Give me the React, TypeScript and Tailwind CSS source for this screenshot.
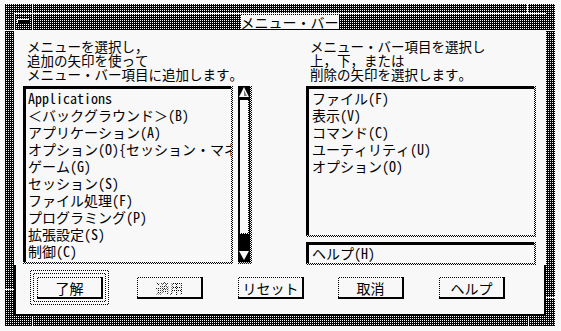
import React from "react";

const D75 = "bg-[conic-gradient(#f8f8f8_0_25%,#000_0)] bg-[length:2px_2px]";
const D50 = "bg-[repeating-conic-gradient(#000_0_25%,#f8f8f8_0_50%)] bg-[length:2px_2px]";
const FONT = "font-['Noto_Sans_Mono_CJK_JP','Noto_Sans_CJK_JP',monospace] font-light";

function Button({ label, disabled }: { label: string; disabled?: boolean }) {
  return (
    <div className="w-[66px] h-[22px] bg-black pr-[2px] pb-[2px]">
      <div className={`w-full h-full ${D50} pt-px pl-px`}>
        <div className="w-full h-full bg-[#f8f8f8] flex items-center justify-center text-[14px] leading-[14px]">
          {disabled ? (
            <span className={`${D50} bg-clip-text text-transparent`}>{label}</span>
          ) : (
            <span>{label}</span>
          )}
        </div>
      </div>
    </div>
  );
}

function Sunken({ className, children }: { className: string; children?: React.ReactNode }) {
  return (
    <div className={`${className} ${D50} pr-[2px] pb-[2px]`}>
      <div className="w-full h-full bg-[#f8f8f8] border-t-[3px] border-l-[3px] border-black overflow-hidden">
        {children}
      </div>
    </div>
  );
}

export default function App() {
  const leftItems = [
    "Applications",
    "＜バックグラウンド＞(B)",
    "アプリケーション(A)",
    "オプション(O){セッション・マネージャ}",
    "ゲーム(G)",
    "セッション(S)",
    "ファイル処理(F)",
    "プログラミング(P)",
    "拡張設定(S)",
    "制御(C)",
  ];
  const rightItems = ["ファイル(F)", "表示(V)", "コマンド(C)", "ユーティリティ(U)", "オプション(O)"];

  return (
    <div className={`w-[561px] h-[331px] bg-[#f8f8f8] pt-[4px] pl-[5px] overflow-hidden text-black ${FONT}`}>
      <div className={`relative w-[550px] h-[322px] ${D75} pt-[9px] px-[9px] pb-[10px] flex flex-col`}>
        {/* resize corner separators */}
        <span className="absolute left-[27px] top-0 w-px h-[9px] bg-[#f8f8f8]" />
        <span className="absolute left-[522px] top-0 w-px h-[9px] bg-[#f8f8f8]" />
        <span className="absolute left-[27px] bottom-0 w-px h-[10px] bg-[#f8f8f8]" />
        <span className="absolute left-[523px] bottom-0 w-px h-[10px] bg-[#f8f8f8]" />
        <span className="absolute left-0 top-[26px] w-[9px] h-px bg-[#f8f8f8]" />
        <span className="absolute right-0 top-[26px] w-[9px] h-px bg-[#f8f8f8]" />
        <span className="absolute left-0 top-[285px] w-[9px] h-px bg-[#f8f8f8]" />
        <span className="absolute right-0 top-[293px] w-[9px] h-px bg-[#f8f8f8]" />

        {/* title bar */}
        <div className="flex h-[17px] border-t border-[#f8f8f8]">
          <div className="w-[18px] border-l border-[#f8f8f8] flex items-start pt-[5px] pl-[2px]">
            <div className="w-[12px] h-[4px] border-t border-l border-[#f8f8f8] bg-black" />
          </div>
          <div className="w-px bg-[#f8f8f8]" />
          <div className="flex-1 flex justify-center items-end border-b border-black">
            <span className="bg-[#f8f8f8] h-[14px] text-[14px] leading-[14px]">メニュー・バー</span>
          </div>
        </div>

        {/* content */}
        <div className="flex-1 bg-[#f8f8f8] flex flex-col">
          <div className="flex pt-[9px]">
            <div className="ml-[9px] w-[229px] flex flex-col">
              <div className="pl-[4px] text-[13.5px] leading-[14px]">
                <div>メニューを選択し，</div>
                <div>追加の矢印を使って</div>
                <div>メニュー・バー項目に追加します。</div>
              </div>
              <div className="mt-[5px] flex gap-[5px]">
                <Sunken className="w-[210px] h-[178px]">
                  <div className="pt-[1px] pl-[2px] text-[14px] leading-[17px] whitespace-nowrap">
                    {leftItems.map((t) => (
                      <div key={t}>{t}</div>
                    ))}
                  </div>
                </Sunken>
                {/* scrollbar */}
                <div className={`w-[14px] h-[178px] ${D50} pr-[2px] pb-[2px]`}>
                  <div className="w-full h-full bg-black flex flex-col items-center">
                    <svg width="12" height="13" viewBox="0 0 12 13" className="shrink-0">
                      <polygon points="6,1 11,11 1,11" fill="#f8f8f8" />
                      <polygon points="6,4 9,10 6,10" fill="#000" opacity="0.5" />
                    </svg>
                    <div className="w-full flex-1 px-[1px] pt-[1px] flex flex-col">
                      <div className={`h-[134px] ${D50} pr-[1px] pb-[1px]`}>
                        <div className="w-full h-full bg-[#f8f8f8] border-l border-black" />
                      </div>
                    </div>
                    <svg width="12" height="13" viewBox="0 0 12 13" className="shrink-0">
                      <polygon points="1,2 11,2 6,11" fill="#f8f8f8" />
                    </svg>
                  </div>
                </div>
              </div>
            </div>

            <div className="ml-[54px] w-[230px] flex flex-col">
              <div className="pl-[4px] text-[13.5px] leading-[14px]">
                <div>メニュー・バー項目を選択し</div>
                <div>上，下，または</div>
                <div>削除の矢印を選択します。</div>
              </div>
              <Sunken className="mt-[5px] w-[230px] h-[151px]">
                <div className="pt-[1px] pl-[3px] text-[14px] leading-[17px] whitespace-nowrap">
                  {rightItems.map((t) => (
                    <div key={t}>{t}</div>
                  ))}
                </div>
              </Sunken>
              <Sunken className="mt-[5px] w-[230px] h-[23px]">
                <div className="pl-[3px] text-[14px] leading-[17px]">ヘルプ(H)</div>
              </Sunken>
            </div>
          </div>

          {/* buttons */}
          <div className="flex-1 border-x-2 border-b-2 border-black flex items-start pt-[5px] pl-[14px]">
            <div className={`${D50} p-px`}>
              <div className="bg-[#f8f8f8] p-[2px]">
                <div className={`${D50} p-px`}>
                  <div className="bg-[#f8f8f8] pl-[3px] pt-[3px] pr-[2px] pb-[2px]">
                    <Button label="了解" />
                  </div>
                </div>
              </div>
            </div>
            <div className="ml-[28px] mt-[7px]">
              <Button label="適用" disabled />
            </div>
            <div className="ml-[35px] mt-[7px]">
              <Button label="リセット" />
            </div>
            <div className="ml-[34px] mt-[7px]">
              <Button label="取消" />
            </div>
            <div className="ml-[35px] mt-[7px]">
              <Button label="ヘルプ" />
            </div>
          </div>
        </div>
      </div>
    </div>
  );
}
